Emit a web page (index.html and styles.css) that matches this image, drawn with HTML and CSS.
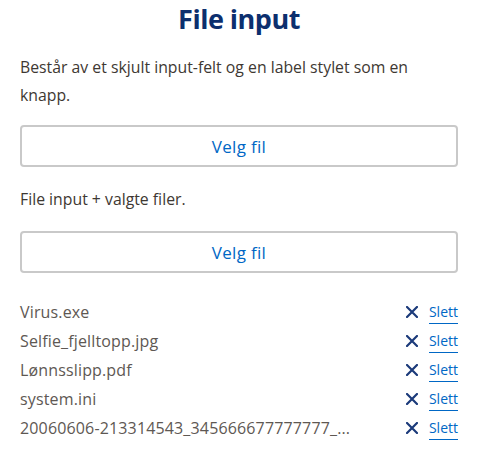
FILE: index.html
```html
<!DOCTYPE html>
<html lang="no">
<head>
<meta charset="utf-8">
<link rel="stylesheet" href="styles.css">
</head>
<body>
<main class="page">
  <h1 class="title">File input</h1>
  <p class="text text-intro">Består av et skjult input-felt og en label stylet som en knapp.</p>
  <label class="file-btn">Velg fil</label>
  <p class="text text-single">File input + valgte filer.</p>
  <label class="file-btn">Velg fil</label>
  <ul class="files">
    <li class="file"><span class="file-name">Virus.exe</span><span class="remove"><svg class="x" viewBox="0 0 12 12" width="12" height="12"><path d="M1 1L11 11M11 1L1 11" stroke="#1b3a7a" stroke-width="2.2" stroke-linecap="square"/></svg><a class="link" href="#">Slett</a></span></li>
    <li class="file"><span class="file-name">Selfie_fjelltopp.jpg</span><span class="remove"><svg class="x" viewBox="0 0 12 12" width="12" height="12"><path d="M1 1L11 11M11 1L1 11" stroke="#1b3a7a" stroke-width="2.2" stroke-linecap="square"/></svg><a class="link" href="#">Slett</a></span></li>
    <li class="file"><span class="file-name">Lønnsslipp.pdf</span><span class="remove"><svg class="x" viewBox="0 0 12 12" width="12" height="12"><path d="M1 1L11 11M11 1L1 11" stroke="#1b3a7a" stroke-width="2.2" stroke-linecap="square"/></svg><a class="link" href="#">Slett</a></span></li>
    <li class="file"><span class="file-name">system.ini</span><span class="remove"><svg class="x" viewBox="0 0 12 12" width="12" height="12"><path d="M1 1L11 11M11 1L1 11" stroke="#1b3a7a" stroke-width="2.2" stroke-linecap="square"/></svg><a class="link" href="#">Slett</a></span></li>
    <li class="file"><span class="file-name">20060606-213314543_345666677777777_...</span><span class="remove"><svg class="x" viewBox="0 0 12 12" width="12" height="12"><path d="M1 1L11 11M11 1L1 11" stroke="#1b3a7a" stroke-width="2.2" stroke-linecap="square"/></svg><a class="link" href="#">Slett</a></span></li>
  </ul>
</main>
</body>
</html>
```
FILE: styles.css
```css
* { box-sizing: border-box; }
html, body { margin: 0; padding: 0; background: #fff; }
body {
  font-family: "Open Sans", "Noto Sans", sans-serif;
  color: #3e3832;
}
.page {
  padding: 0 21px 0 20px;
}
.title {
  margin: 0;
  padding-top: 2px;
  font-size: 27px;
  line-height: 33px;
  font-weight: 700;
  letter-spacing: -0.5px;
  text-align: center;
  color: #0c2f6e;
}
.text {
  margin: 18px 0 16px;
  font-size: 15.8px;
  line-height: 28px;
  color: #3e3832;
}
.text-intro {
  max-width: 432px;
}
.text-single {
  margin: 18px 0 18px;
}
.file-btn {
  display: flex;
  align-items: center;
  justify-content: center;
  height: 42px;
  border: 2px solid #c9c9c9;
  border-radius: 4px;
  color: #0067c5;
  font-size: 17px;
  letter-spacing: 0.3px;
}
.files {
  list-style: none;
  margin: 24px 0 0;
  padding: 0;
}
.file {
  display: flex;
  align-items: center;
  justify-content: space-between;
  height: 29px;
  font-size: 16px;
  letter-spacing: 0.15px;
  color: #5e5853;
}
.remove {
  display: flex;
  align-items: center;
  gap: 11px;
}
.x { display: block; }
.link {
  color: #0067c5;
  font-size: 14px;
  letter-spacing: 0;
  text-decoration: none;
  border-bottom: 1px solid #0067c5;
  line-height: 18px;
  padding-bottom: 2px;
  margin-top: 3px;
}
```
